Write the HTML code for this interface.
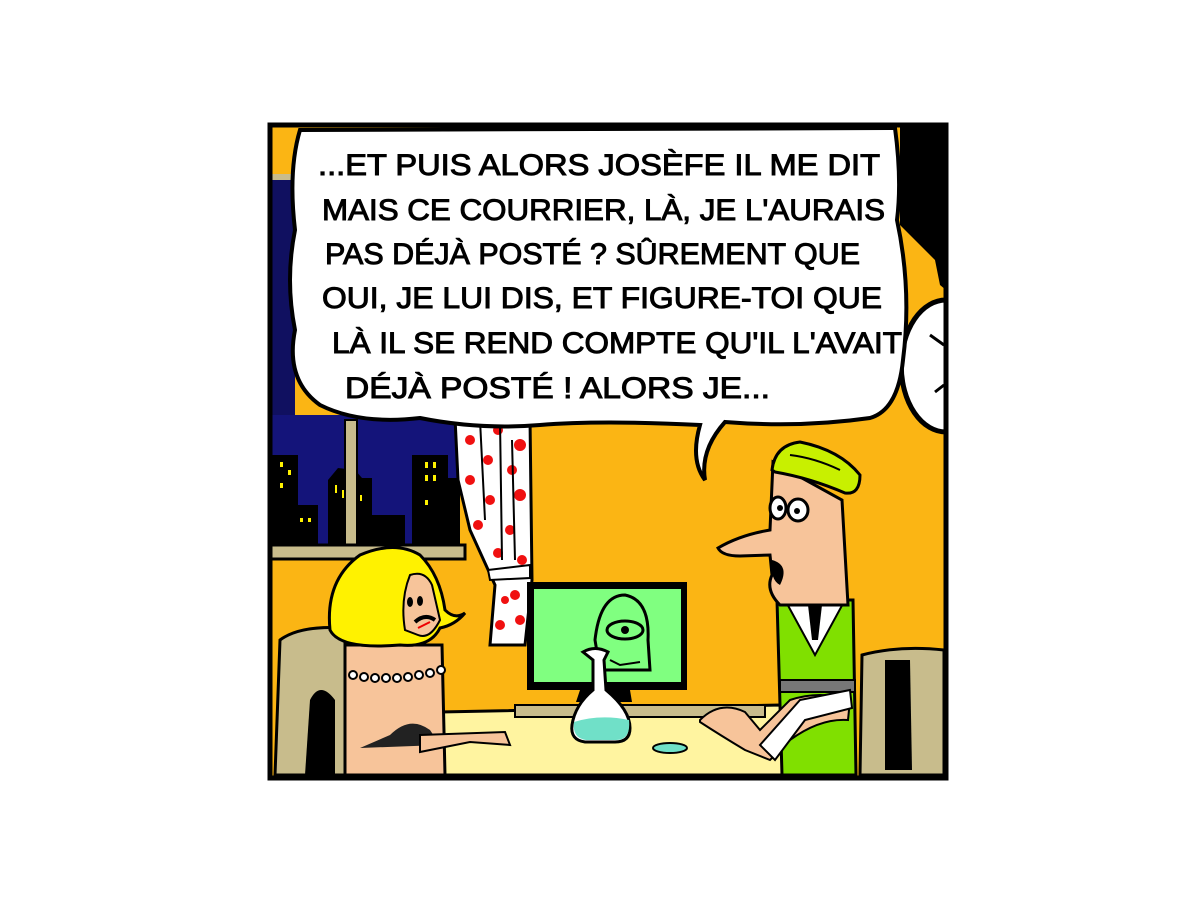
<!DOCTYPE html>
<html><head><meta charset="utf-8"><style>
html,body{margin:0;padding:0;background:#fff;width:1200px;height:900px;overflow:hidden}
svg{display:block}
text{font-family:"Liberation Sans",sans-serif;fill:#000}
</style></head><body>
<svg width="1200" height="900" viewBox="0 0 1200 900" xmlns="http://www.w3.org/2000/svg">
<rect width="1200" height="900" fill="#fff"/>
<rect x="270" y="125" width="676" height="653" fill="#FBB514"/>
<rect x="270" y="178" width="25" height="250" fill="#101060"/>
<rect x="270" y="174" width="22" height="6" fill="#C8BC8C"/>
<rect x="270" y="415" width="190" height="135" fill="#14147A"/>
<g fill="#000">
<path d="M270 455 L298 455 L298 505 L318 505 L318 545 L270 545Z"/>
<path d="M328 480 L338 468 L355 470 L362 478 L372 478 L372 545 L328 545Z"/>
<path d="M372 515 L405 515 L405 545 L372 545Z"/>
<path d="M412 455 L448 455 L448 478 L460 478 L460 545 L412 545Z"/>
</g>
<g fill="#FFF200">
<rect x="280" y="462" width="3" height="5"/><rect x="288" y="470" width="3" height="5"/><rect x="280" y="483" width="3" height="5"/>
<rect x="335" y="485" width="2" height="8"/><rect x="342" y="490" width="2" height="8"/><rect x="360" y="495" width="2" height="6"/>
<rect x="425" y="462" width="3" height="6"/><rect x="433" y="462" width="3" height="6"/><rect x="425" y="475" width="3" height="6"/><rect x="433" y="475" width="3" height="6"/><rect x="425" y="500" width="3" height="5"/>
<rect x="300" y="518" width="3" height="4"/><rect x="308" y="518" width="3" height="4"/>
</g>
<rect x="345" y="420" width="12" height="130" fill="#C8BC8C" stroke="#000" stroke-width="2"/>
<rect x="270" y="545" width="195" height="14" fill="#C8BC8C" stroke="#000" stroke-width="3"/>
<path d="M455 418 L530 418 L532 580 L525 645 L490 645 L495 585 L470 530 L458 480Z" fill="#fff" stroke="#000" stroke-width="3"/>
<g fill="#F01010">
<circle cx="470" cy="440" r="5"/><circle cx="498" cy="430" r="5"/><circle cx="520" cy="445" r="6"/><circle cx="488" cy="460" r="5"/><circle cx="512" cy="470" r="5"/><circle cx="470" cy="480" r="5"/><circle cx="520" cy="495" r="6"/><circle cx="490" cy="500" r="5"/><circle cx="478" cy="525" r="5"/><circle cx="510" cy="530" r="5"/><circle cx="498" cy="553" r="5"/><circle cx="522" cy="560" r="5"/><circle cx="515" cy="595" r="5"/><circle cx="520" cy="620" r="5"/><circle cx="500" cy="625" r="5"/><circle cx="505" cy="600" r="4"/>
</g>
<path d="M480 420 L485 520 M500 420 L502 560 M512 440 L515 560" stroke="#000" stroke-width="2" fill="none"/>
<path d="M488 570 L530 565 L530 578 L490 580Z" fill="#fff" stroke="#000" stroke-width="2"/>
<path d="M946 300 A42 62 0 0 0 946 432" fill="#fff" stroke="#000" stroke-width="5"/>
<path d="M930 335 L944 345 M935 392 L944 385" stroke="#000" stroke-width="3"/>
<path d="M900 125 L946 125 L946 290 L940 285 L935 260 L920 245 L900 225Z" fill="#000"/>
<path d="M300 130 L895 128 Q902 180 897 220 Q912 290 903 360 Q898 410 870 418 Q800 428 725 422 Q700 450 705 480 Q690 460 700 425 Q600 420 540 425 Q480 430 420 418 Q360 425 320 405 Q285 380 295 330 Q285 280 295 230 Q288 170 300 130Z" fill="#fff" stroke="#000" stroke-width="4"/>
<g font-size="30" stroke="#000" stroke-width="1">
<text x="318" y="175" textLength="562" lengthAdjust="spacingAndGlyphs">...ET PUIS ALORS JOSÈFE IL ME DIT</text>
<text x="322" y="220" textLength="563" lengthAdjust="spacingAndGlyphs">MAIS CE COURRIER, LÀ, JE L'AURAIS</text>
<text x="325" y="264" textLength="535" lengthAdjust="spacingAndGlyphs">PAS DÉJÀ POSTÉ ?  SÛREMENT QUE</text>
<text x="322" y="308" textLength="560" lengthAdjust="spacingAndGlyphs">OUI, JE LUI DIS, ET FIGURE-TOI QUE</text>
<text x="332" y="353" textLength="570" lengthAdjust="spacingAndGlyphs">LÀ IL SE REND COMPTE QU'IL L'AVAIT</text>
<text x="345" y="398" textLength="425" lengthAdjust="spacingAndGlyphs">DÉJÀ POSTÉ ! ALORS JE...</text>
</g>
<path d="M280 640 Q300 625 345 628 L345 775 L275 775Z" fill="#C8BC8C" stroke="#000" stroke-width="3"/>
<path d="M310 700 Q320 680 335 700 L335 775 L305 775Z" fill="#000"/>
<path d="M862 655 Q900 645 944 650 L944 775 L860 775Z" fill="#C8BC8C" stroke="#000" stroke-width="3"/>
<path d="M885 660 L910 660 L912 770 L885 770Z" fill="#000"/>
<path d="M440 712 L780 705 L810 775 L440 775Z" fill="#FFF4A0" stroke="#000" stroke-width="3"/>
<rect x="515" y="705" width="250" height="12" fill="#C8BC8C" stroke="#000" stroke-width="2"/>
<rect x="527" y="582" width="160" height="108" fill="#000"/>
<rect x="534" y="589" width="147" height="93" fill="#80FF80"/>
<path d="M580 690 L630 690 L632 702 L576 702Z" fill="#000"/>
<path d="M595 640 Q600 595 625 595 Q650 600 648 640 L650 670 L600 670Z" fill="none" stroke="#000" stroke-width="3"/>
<ellipse cx="625" cy="630" rx="18" ry="9" fill="none" stroke="#000" stroke-width="3"/>
<circle cx="625" cy="630" r="4" fill="#000"/>
<path d="M610 660 L620 665 L640 662" stroke="#000" stroke-width="2" fill="none"/>
<path d="M583 652 Q595 645 608 652 L604 660 L606 690 Q630 710 630 728 Q630 742 615 742 L585 742 Q570 740 572 725 Q575 705 593 690 L593 660Z" fill="#fff" stroke="#000" stroke-width="3"/>
<path d="M574 722 Q600 714 629 720 Q631 740 616 740 L586 740 Q572 738 574 722Z" fill="#70E0C8"/>
<ellipse cx="670" cy="748" rx="17" ry="5" fill="#70E0C8" stroke="#000" stroke-width="2"/>
<path d="M345 645 L442 645 L445 775 L345 775Z" fill="#F7C49A" stroke="#000" stroke-width="3"/>
<path d="M390 735 Q410 715 430 730 L440 745 L360 748Z" fill="#222"/>
<path d="M420 735 L505 732 L510 745 L470 742 L420 752Z" fill="#F7C49A" stroke="#000" stroke-width="2"/>
<g fill="#fff" stroke="#000" stroke-width="2">
<circle cx="353" cy="675" r="4"/><circle cx="364" cy="677" r="4"/><circle cx="375" cy="678" r="4"/><circle cx="386" cy="678" r="4"/><circle cx="397" cy="678" r="4"/><circle cx="408" cy="677" r="4"/><circle cx="419" cy="675" r="4"/><circle cx="430" cy="673" r="4"/><circle cx="441" cy="670" r="4"/>
</g>
<path d="M360 555 Q395 540 420 555 Q440 575 445 610 Q455 620 465 613 Q455 625 440 628 Q430 648 400 645 Q340 650 330 630 Q325 580 360 555Z" fill="#FFF200" stroke="#000" stroke-width="3"/>
<path d="M410 575 Q425 570 432 585 L440 620 Q430 640 418 635 L405 630 Q400 600 410 575Z" fill="#F7C49A" stroke="#000" stroke-width="2"/>
<ellipse cx="410" cy="602" rx="3" ry="5" fill="#000"/><ellipse cx="420" cy="601" rx="3" ry="5" fill="#000"/>
<path d="M415 622 Q425 613 435 620" stroke="#000" stroke-width="4" fill="none"/>
<path d="M418 628 L430 622" stroke="#E00" stroke-width="2"/>
<path d="M777 600 L853 600 L856 775 L782 775Z" fill="#80E000" stroke="#000" stroke-width="3"/>
<rect x="780" y="680" width="75" height="12" fill="#777" stroke="#000" stroke-width="2"/>
<path d="M785 600 L815 655 L845 600Z" fill="#fff" stroke="#000" stroke-width="2"/>
<path d="M808 605 L822 605 L818 640 L812 640Z" fill="#000"/>
<path d="M773 462 L770 530 Q740 535 718 548 Q722 556 740 556 L770 555 L772 575 Q765 590 780 605 L848 605 L842 500Z" fill="#F7C49A" stroke="#000" stroke-width="3"/>
<path d="M772 470 Q775 445 800 442 Q840 450 860 475 Q860 495 845 493 Q810 478 775 472Z" fill="#C8F000" stroke="#000" stroke-width="3"/>
<path d="M790 455 Q815 458 840 470" stroke="#000" stroke-width="2" fill="none"/>
<ellipse cx="778" cy="508" rx="8" ry="11" fill="#fff" stroke="#000" stroke-width="3"/><circle cx="780" cy="508" r="3" fill="#000"/>
<ellipse cx="798" cy="510" rx="10" ry="11" fill="#fff" stroke="#000" stroke-width="3"/><circle cx="797" cy="511" r="3" fill="#000"/>
<path d="M772 560 Q790 565 780 585 Q770 580 772 560Z" fill="#000"/>
<path d="M700 720 Q720 700 745 712 L760 730 L790 700 Q820 690 850 700 L848 720 Q820 718 790 740 L770 760 L745 750 Q720 735 700 722Z" fill="#F7C49A" stroke="#000" stroke-width="2"/>
<path d="M760 745 L800 700 L850 690 L852 708 L805 720 L775 760Z" fill="#fff" stroke="#000" stroke-width="2"/>
<rect x="270" y="125" width="676" height="653" fill="none" stroke="#000" stroke-width="5"/>
</svg>
</body></html>
